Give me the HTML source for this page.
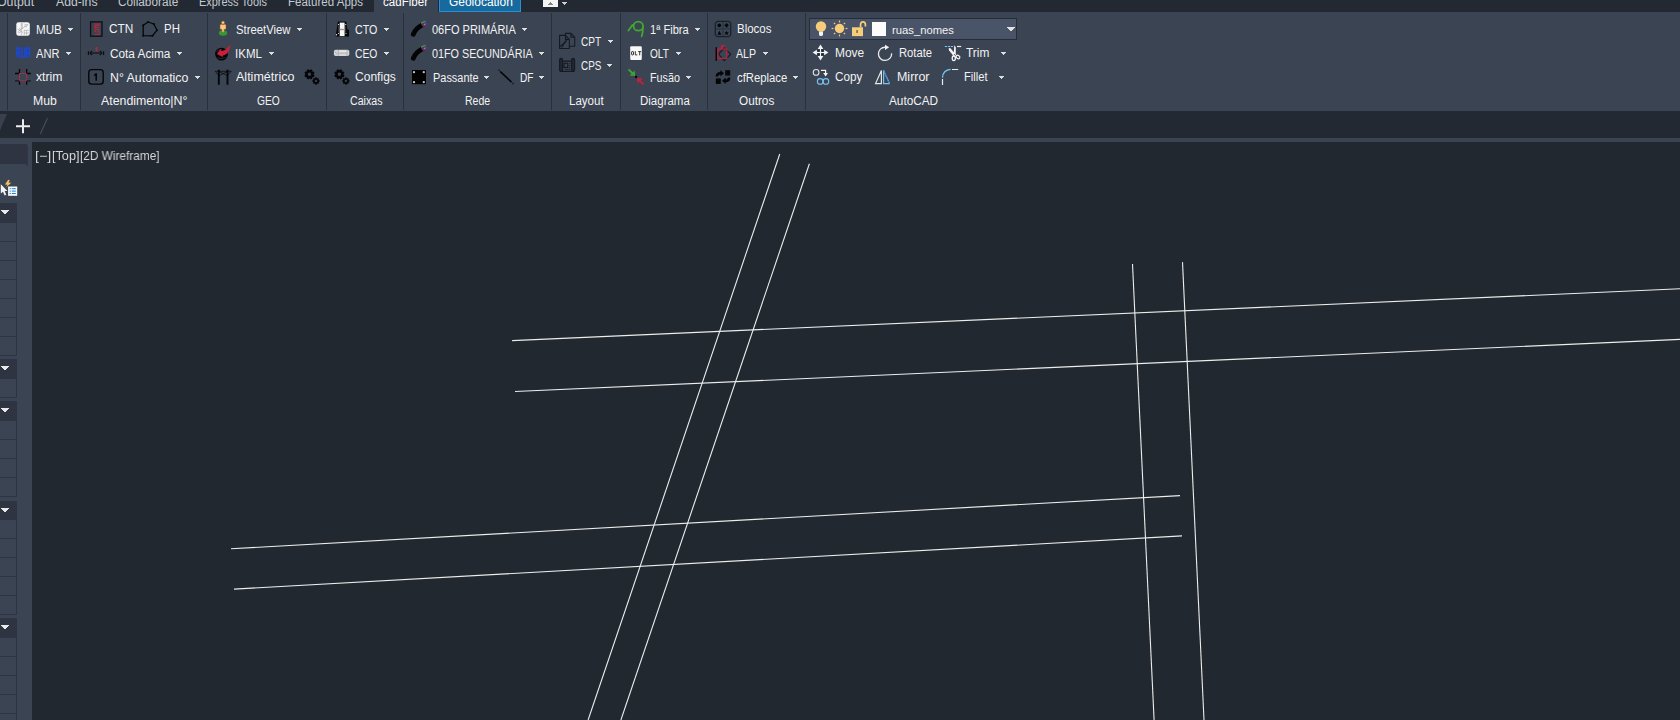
<!DOCTYPE html>
<html><head><meta charset="utf-8"><title>AutoCAD</title>
<style>
html,body{margin:0;padding:0;}
body{width:1680px;height:720px;overflow:hidden;background:#212830;position:relative;font-family:"Liberation Sans",sans-serif;}
.a{position:absolute;}
.t{position:absolute;white-space:pre;transform-origin:0 0;line-height:14px;height:14px;font-family:"Liberation Sans",sans-serif;}
.g{will-change:transform;}
i{position:absolute;display:block;}
.sp{top:13px;width:1px;height:97px;background:#2a303b;}
.ar{width:0;height:0;border-left:2.8px solid transparent;border-right:2.8px solid transparent;border-top:3.1px solid #d2d4d9;}
.ph{left:0;width:17px;height:19.5px;background:#2e3441;}
.pa{left:1px;width:0;height:0;border-left:4px solid transparent;border-right:4px solid transparent;border-top:4px solid #e4e4e4;}
.pr{left:0;width:16px;height:18px;border-right:1px solid #2e3441;border-bottom:1px solid #2e3441;}
svg.dw{position:absolute;left:0;top:0;}
svg.dw line{stroke:#ededed;stroke-width:1.1;}
svg.ic{position:absolute;overflow:visible;}
</style></head><body>
<!-- top tab strip -->
<div class="a" style="left:0;top:0;width:1680px;height:12px;background:#222933"></div>
<div class="a" style="left:374px;top:0;width:64px;height:12px;background:#3b4453"></div>
<div class="a" style="left:439px;top:-2px;width:80px;height:12px;background:#176a9d;border:1px solid #2c8fd6"></div>
<div class="a" style="left:543px;top:0;width:15px;height:7px;background:#f4f4f4"></div>
<!-- ribbon -->
<div class="a" style="left:0;top:12px;width:1680px;height:99px;background:#3b4453"></div>
<i class="sp" style="left:7px"></i>
<i class="sp" style="left:80px"></i>
<i class="sp" style="left:207px"></i>
<i class="sp" style="left:326px"></i>
<i class="sp" style="left:403px"></i>
<i class="sp" style="left:551px"></i>
<i class="sp" style="left:620px"></i>
<i class="sp" style="left:707px"></i>
<i class="sp" style="left:805px"></i>
<!-- layer combo -->
<div class="a" style="left:809px;top:18px;width:206px;height:20px;background:#4a5468;border:1px solid #272c37"></div>
<div class="a" style="left:872px;top:22px;width:14px;height:14px;background:#fbfbfb"></div>
<!-- file tab bar -->
<div class="a" style="left:0;top:111px;width:1680px;height:27px;background:#222933"></div>
<svg class="ic" style="left:0;top:111px" width="60" height="27" viewBox="0 111 60 27">
<polygon points="0,114 7,114 0,130.5" fill="#39414f"/>
<path d="M16 126.2H30M23 119.2V133.2" stroke="#ececec" stroke-width="2" fill="none"/>
<line x1="47.5" y1="118" x2="40.3" y2="134" stroke="#4d5563" stroke-width="1"/>
</svg>
<!-- strip under tab bar + left palette -->
<div class="a" style="left:0;top:138px;width:1680px;height:4px;background:#3b4453"></div>
<div class="a" style="left:0;top:142px;width:32px;height:578px;background:#3b4453"></div>
<svg class="ic" style="left:0;top:142px" width="32" height="30" viewBox="0 142 32 30">
<path d="M0 144H25.5Q27.8 144 27.8 146.3V166.6L25.5 164H0Z" fill="#2e3441"/>
</svg>
<i class="ph" style="top:203px"></i>
<i class="pr" style="top:222.5px"></i>
<i class="pr" style="top:241.5px"></i>
<i class="pr" style="top:260.5px"></i>
<i class="pr" style="top:279.5px"></i>
<i class="pr" style="top:298.5px"></i>
<i class="pr" style="top:317.5px"></i>
<i class="pr" style="top:336.5px"></i>
<i class="ph" style="top:359px"></i>
<i class="pr" style="top:378.5px"></i>
<i class="ph" style="top:401px"></i>
<i class="pr" style="top:420.5px"></i>
<i class="pr" style="top:439.5px"></i>
<i class="pr" style="top:458.5px"></i>
<i class="pr" style="top:477.5px"></i>
<i class="ph" style="top:500.5px"></i>
<i class="pr" style="top:520.0px"></i>
<i class="pr" style="top:539.0px"></i>
<i class="pr" style="top:558.0px"></i>
<i class="pr" style="top:577.0px"></i>
<i class="pr" style="top:596.0px"></i>
<i class="ph" style="top:618px"></i>
<i class="pr" style="top:637.5px"></i>
<i class="pr" style="top:656.5px"></i>
<i class="pr" style="top:675.5px"></i>
<i class="pr" style="top:694.5px"></i>
<i class="pr" style="top:713.5px"></i>
<i class="pr" style="top:732.5px"></i>
<svg class="dw" width="1680" height="720" viewBox="0 0 1680 720"><line x1="779.75" y1="154" x2="588.1" y2="720"/><line x1="809.4" y1="163.75" x2="620.9" y2="720"/><line x1="512.1" y1="340.6" x2="1680" y2="288.75"/><line x1="515" y1="391.5" x2="1680" y2="339.4"/><line x1="231" y1="548.75" x2="1180" y2="495.6"/><line x1="234" y1="589.1" x2="1182" y2="535.9"/><line x1="1132.5" y1="264" x2="1154.1" y2="720"/><line x1="1182.5" y1="262.1" x2="1204" y2="720"/></svg>
<svg class="ic" style="left:0;top:0" width="1680" height="200" viewBox="0 0 1680 200">
<!-- MUB -->
<rect x="16.3" y="22.2" width="13.5" height="13.6" rx="2.4" fill="#f7f7f7"/>
<g stroke="#ababab" stroke-width="0.7" fill="none"><path d="M21.3 23V35M22.3 23V29M18 31.6L28.4 24.2M17.5 29L23 32.5M19 28L21 30M23.8 30.3H29M24.2 30.3V35M26.6 30.3V35M24.2 33H29M24.5 24.2L28 25.3M24 26L27 27M18 33L20.5 32"/></g>
<!-- RUA -->
<g stroke="#1849dc" stroke-width="1.45" fill="none" stroke-linejoin="miter"><path d="M16.9 57.8V48H19.9V52.2H16.9M18.3 52.4L20.2 57.8"/><path d="M22.1 47.2V56.9H24.7V47.2"/><path d="M26.6 57.8V48H29.5V57.8M26.6 53.2H29.5"/></g>
<!-- xtrim -->
<g stroke="#050608" stroke-width="1.3" fill="none"><path d="M19.5 69V73.5M26.7 69V73.5M19.5 81V84.8M26.7 81V84.8M15 73.5H19.5M26.7 73.5H30.8"/><path d="M15 80.9H19.5M26.7 80.9H30.8" stroke="#1e232c" stroke-width="1.6"/></g>
<rect x="19.5" y="73.5" width="7.2" height="7.4" fill="none" stroke="#c9283e" stroke-width="1.0" stroke-dasharray="1.7 0.8"/>
<!-- CTN -->
<rect x="90.6" y="21.9" width="11.4" height="14.3" fill="#39424f" stroke="#0c1016" stroke-width="1.3"/>
<text transform="translate(99.1,35.3) rotate(-90)" font-family="Liberation Sans" font-weight="bold" font-size="7.2" fill="#cb2038" textLength="12.4" lengthAdjust="spacingAndGlyphs">LOTE</text>
<!-- PH -->
<polygon points="143.2,25.2 148.2,22 153.8,24 157,30.2 152.5,35.8 143.2,35.7" fill="none" stroke="#050608" stroke-width="1.3" stroke-linejoin="round"/>
<g fill="#050608"><circle cx="143.2" cy="25.2" r="1"/><circle cx="148.2" cy="22" r="1"/><circle cx="153.8" cy="24" r="1"/><circle cx="157" cy="30.2" r="1"/><circle cx="152.5" cy="35.8" r="1"/><circle cx="143.2" cy="35.7" r="1"/></g>
<!-- Cota Acima -->
<g stroke="#0b0e13" stroke-width="1.3" fill="none"><path d="M88.5 51.2V54.9M103.5 51.2V54.9"/><path d="M92 51L90.4 53 92 55M100 51L101.6 53 100 55" stroke-linejoin="round"/><path d="M91 53H101" stroke="#1d222b" stroke-width="1.7"/></g>
<path d="M95.1 48.2L96.5 47H97.3V51.1H96.1V48.5L95.1 49.2Z" fill="#cb2038"/>
<!-- N° Automatico -->
<rect x="88.8" y="69.6" width="14.4" height="14.5" rx="2.8" fill="none" stroke="#050608" stroke-width="1.4"/>
<path d="M93.9 74.7L95.6 73.2H97V80.8H95.4V75.3L93.9 76.3Z" fill="#050608"/>
<!-- StreetView -->
<ellipse cx="223" cy="32.9" rx="4.2" ry="2.6" fill="#2f9a30"/><path d="M221.6 34.6L223 36L224.4 34.6Z" fill="#2f9a30"/>
<path d="M220 25.6Q220 24.3 221.3 24.3H224.7Q226 24.3 226 25.6V28.6Q226 29.4 225 29.4H224.1V32.2H221.9V29.4H221Q220 29.4 220 28.6Z" fill="#f6ca7c" stroke="#9a4b22" stroke-width="0.5"/>
<circle cx="223" cy="22.6" r="1.6" fill="#f9d484" stroke="#9a4b22" stroke-width="0.5"/>
<path d="M222.3 24.4H223.7L223 25.3Z" fill="#a8402a"/>
<!-- IKML -->
<circle cx="221.5" cy="54.1" r="6.4" fill="#050608"/>
<path d="M216.3 51.5Q219 49.5 222 49.3M217 57.8Q221 59.3 225.5 57.6" stroke="#39424f" stroke-width="0.6" fill="none"/>
<path d="M230.6 44.9L229.4 49.6Q227.8 54.4 223 55.6L222.7 56.9L216.8 54L220.6 49L221.4 50.9Q226.2 50.2 228.4 46.4Z" fill="#c6203a"/>
<!-- Altimetrico -->
<g stroke="#050608" fill="none"><path d="M218.8 69.7V84.8M227.5 69.7V84.8" stroke-width="1.9"/><path d="M215.2 71.3H231.2M215.2 71.3L218.8 75.4M231.2 71.3L227.5 75.4M219 71.5L227.4 75.6M219 75.6L227.4 71.5" stroke-width="0.7"/></g>
<path d="M313.72 74.83 L314.60 75.31 L313.82 77.19 L312.86 76.90 L312.10 77.66 L312.39 78.62 L310.51 79.40 L310.03 78.52 L308.97 78.52 L308.49 79.40 L306.61 78.62 L306.90 77.66 L306.14 76.90 L305.18 77.19 L304.40 75.31 L305.28 74.83 L305.28 73.77 L304.40 73.29 L305.18 71.41 L306.14 71.70 L306.90 70.94 L306.61 69.98 L308.49 69.20 L308.97 70.08 L310.03 70.08 L310.51 69.20 L312.39 69.98 L312.10 70.94 L312.86 71.70 L313.82 71.41 L314.60 73.29 L313.72 73.77Z M307.80 74.30 a1.7 1.7 0 1 0 3.4 0 a1.7 1.7 0 1 0 -3.4 0Z" fill="#050608" fill-rule="evenodd"/><path d="M318.89 80.21 L319.68 80.27 L319.68 81.73 L318.89 81.79 L318.61 82.49 L319.12 83.08 L318.08 84.12 L317.49 83.61 L316.79 83.89 L316.73 84.68 L315.27 84.68 L315.21 83.89 L314.51 83.61 L313.92 84.12 L312.88 83.08 L313.39 82.49 L313.11 81.79 L312.32 81.73 L312.32 80.27 L313.11 80.21 L313.39 79.51 L312.88 78.92 L313.92 77.88 L314.51 78.39 L315.21 78.11 L315.27 77.32 L316.73 77.32 L316.79 78.11 L317.49 78.39 L318.08 77.88 L319.12 78.92 L318.61 79.51Z M314.85 81.00 a1.15 1.15 0 1 0 2.3 0 a1.15 1.15 0 1 0 -2.3 0Z" fill="#050608" fill-rule="evenodd"/>
<path d="M343.62 74.83 L344.50 75.31 L343.72 77.19 L342.76 76.90 L342.00 77.66 L342.29 78.62 L340.41 79.40 L339.93 78.52 L338.87 78.52 L338.39 79.40 L336.51 78.62 L336.80 77.66 L336.04 76.90 L335.08 77.19 L334.30 75.31 L335.18 74.83 L335.18 73.77 L334.30 73.29 L335.08 71.41 L336.04 71.70 L336.80 70.94 L336.51 69.98 L338.39 69.20 L338.87 70.08 L339.93 70.08 L340.41 69.20 L342.29 69.98 L342.00 70.94 L342.76 71.70 L343.72 71.41 L344.50 73.29 L343.62 73.77Z M337.70 74.30 a1.7 1.7 0 1 0 3.4 0 a1.7 1.7 0 1 0 -3.4 0Z" fill="#050608" fill-rule="evenodd"/><path d="M348.79 80.21 L349.58 80.27 L349.58 81.73 L348.79 81.79 L348.51 82.49 L349.02 83.08 L347.98 84.12 L347.39 83.61 L346.69 83.89 L346.63 84.68 L345.17 84.68 L345.11 83.89 L344.41 83.61 L343.82 84.12 L342.78 83.08 L343.29 82.49 L343.01 81.79 L342.22 81.73 L342.22 80.27 L343.01 80.21 L343.29 79.51 L342.78 78.92 L343.82 77.88 L344.41 78.39 L345.11 78.11 L345.17 77.32 L346.63 77.32 L346.69 78.11 L347.39 78.39 L347.98 77.88 L349.02 78.92 L348.51 79.51Z M344.75 81.00 a1.15 1.15 0 1 0 2.3 0 a1.15 1.15 0 1 0 -2.3 0Z" fill="#050608" fill-rule="evenodd"/>
<!-- CTO -->
<path d="M337.9 21.5H346.4L348.3 36.5H335.6Z" fill="#050608"/><path d="M347.2 29L349 30V36.4H347.8Z" fill="#050608"/>
<rect x="339.7" y="22.6" width="4.9" height="13.5" fill="#f6f6f6"/><rect x="339.7" y="28.8" width="4.9" height="1.4" fill="#9a9a9a"/>
<g fill="#f0f0f0"><circle cx="338.5" cy="24.5" r="0.6"/><circle cx="345.7" cy="24.5" r="0.6"/><circle cx="338.5" cy="33.5" r="0.6"/><circle cx="336.5" cy="34.7" r="0.7"/><circle cx="346" cy="33.5" r="0.6"/></g>
<path d="M338.6 25.5V32.5M345.7 25.5V32.5" stroke="#8a8a8a" stroke-width="0.4"/>
<!-- CEO -->
<rect x="333.9" y="49.8" width="15.4" height="6.3" rx="1.8" fill="#d6d6d6"/>
<g stroke="#9c9c9c" stroke-width="0.7" fill="none"><path d="M338.3 50V56M347 50V56M339 53H346.5M335 51.5L337 54.5"/></g>
<rect x="339" y="50.6" width="7.5" height="1.6" fill="#e8e8e8"/>
<g transform="translate(0,0)">
<path d="M413.4 34.2Q415.8 28.0 422.0 25.1" stroke="#030405" stroke-width="4.9" stroke-linecap="round" fill="none"/>
<g transform="rotate(-27 422 25.1)">
<rect x="421.9" y="22.5" width="5" height="1.3" fill="#3aa535"/><rect x="421.90" y="23.60" width="1.3" height="1.2" fill="#d02a2a"/><rect x="421.90" y="24.75" width="1.3" height="1.2" fill="#2146d6"/><rect x="421.90" y="25.90" width="1.3" height="1.2" fill="#d02a2a"/><rect x="423.15" y="23.60" width="1.3" height="1.2" fill="#2146d6"/><rect x="423.15" y="24.75" width="1.3" height="1.2" fill="#d02a2a"/><rect x="423.15" y="25.90" width="1.3" height="1.2" fill="#2146d6"/><rect x="424.40" y="23.60" width="1.3" height="1.2" fill="#d02a2a"/><rect x="424.40" y="24.75" width="1.3" height="1.2" fill="#2146d6"/><rect x="424.40" y="25.90" width="1.3" height="1.2" fill="#d02a2a"/><rect x="425.65" y="23.60" width="1.3" height="1.2" fill="#2146d6"/><rect x="425.65" y="24.75" width="1.3" height="1.2" fill="#d02a2a"/><rect x="425.65" y="25.90" width="1.3" height="1.2" fill="#2146d6"/>
<rect x="424.3" y="25.2" width="0.9" height="0.8" fill="#e8e0d0"/>
</g></g>
<g transform="translate(0,24)">
<path d="M413.4 34.2Q415.8 28.0 422.0 25.1" stroke="#030405" stroke-width="4.9" stroke-linecap="round" fill="none"/>
<g transform="rotate(-27 422 25.1)">
<rect x="421.9" y="22.5" width="5" height="1.3" fill="#3aa535"/><rect x="421.90" y="23.60" width="1.3" height="1.2" fill="#d02a2a"/><rect x="421.90" y="24.75" width="1.3" height="1.2" fill="#2146d6"/><rect x="421.90" y="25.90" width="1.3" height="1.2" fill="#d02a2a"/><rect x="423.15" y="23.60" width="1.3" height="1.2" fill="#2146d6"/><rect x="423.15" y="24.75" width="1.3" height="1.2" fill="#d02a2a"/><rect x="423.15" y="25.90" width="1.3" height="1.2" fill="#2146d6"/><rect x="424.40" y="23.60" width="1.3" height="1.2" fill="#d02a2a"/><rect x="424.40" y="24.75" width="1.3" height="1.2" fill="#2146d6"/><rect x="424.40" y="25.90" width="1.3" height="1.2" fill="#d02a2a"/><rect x="425.65" y="23.60" width="1.3" height="1.2" fill="#2146d6"/><rect x="425.65" y="24.75" width="1.3" height="1.2" fill="#d02a2a"/><rect x="425.65" y="25.90" width="1.3" height="1.2" fill="#2146d6"/>
<rect x="424.3" y="25.2" width="0.9" height="0.8" fill="#e8e0d0"/>
</g></g>
<!-- Passante -->
<rect x="412" y="70" width="14" height="14.2" fill="#020203"/>
<g fill="#c2c2c2"><circle cx="414" cy="72.2" r="1.15"/><circle cx="423.8" cy="72.2" r="1.15"/><circle cx="414" cy="82.2" r="1.15"/><circle cx="423.8" cy="82.2" r="1.15"/></g>
<!-- DF -->
<path d="M500.6 71.9L511 81.6" stroke="#050608" stroke-width="1.6" stroke-linecap="round"/><circle cx="499" cy="70.2" r="0.9" fill="#1a1f27"/><circle cx="513" cy="83.5" r="0.9" fill="#1a1f27"/>
<!-- CPT -->
<g stroke="#151a22" stroke-width="1.1" fill="none" stroke-linejoin="round"><path d="M565.4 35.3V33.4H571L574.7 37.2V46.3H569.3M571 33.4V37.2H574.7"/><path d="M559.6 35.4H565.5L569.3 39.4V48.5H559.6ZM565.5 35.4V39.4H569.3"/><path d="M561.6 46.2L566.6 40.2" stroke-width="1.6"/><circle cx="561.8" cy="46" r="1.2" stroke-width="0.8"/></g>
<!-- CPS -->
<g stroke="#151a22" fill="none"><rect x="559.6" y="58.4" width="3" height="13.2" rx="1.5" stroke-width="1.1" fill="#222833"/><rect x="571.6" y="58.4" width="3" height="13.2" rx="1.5" stroke-width="1.1" fill="#222833"/><path d="M562.6 61.2H571.6M561 71.3H573.2" stroke-width="1.2"/><rect x="564" y="63.3" width="3.8" height="4.2" stroke-width="1.1"/><path d="M569 63.6H570.6M569 65.5H570.6M569 67.4H570.6M565 69.4H570.6" stroke-width="0.7"/></g>
<!-- Fibra -->
<g stroke="#40a830" stroke-width="1.8" fill="none" stroke-linecap="round"><ellipse cx="638.3" cy="26.2" rx="4.75" ry="4.5"/><path d="M632.6 24.9L628.4 30.5M643 27.5Q642.8 33 641.7 36.3"/></g>
<!-- OLT -->
<rect x="630.2" y="46.2" width="11.6" height="13.8" rx="1.2" fill="#f8f8f8"/>
<g stroke="#2b2b2b" stroke-width="0.95" fill="none"><rect x="631.6" y="51.6" width="1.9" height="3.3" rx="0.5"/><path d="M635.3 51.2V54.9H637.3M638.2 51.6H641.2M639.7 51.6V55.3"/></g>
<!-- Fusao -->
<path d="M627.8 70L629.2 68.7L632.9 72.2L634.7 70.4L635.3 76.1L629.5 75.6L631.4 73.7Z" fill="#3ea232"/>
<circle cx="636" cy="77" r="1.15" fill="#050608"/>
<path d="M644.3 83.8L642.9 85.2L639.3 81.6L637.5 83.4L636.9 77.9L642.7 78.3L640.8 80.2Z" fill="#c1203a"/>
<!-- Blocos -->
<path d="M717.2 21.4H728.8L730.7 23.3V34.8L728.8 36.7H717.2L715.3 34.8V23.3Z" fill="none" stroke="#1a202a" stroke-width="1.2"/>
<path d="M723 22V36M716 28.9H730" stroke="#2a313d" stroke-width="1"/>
<circle cx="719.3" cy="25.3" r="1.85" fill="#050608"/><path d="M726.6 22.9L728.9 25.3L726.6 27.7L724.3 25.3Z" fill="#050608"/>
<path d="M719.4 30.8L721.3 34.7H717.5Z" fill="#050608"/><polygon points="726.60,30.80 727.21,32.26 728.79,32.39 727.58,33.42 727.95,34.96 726.60,34.13 725.25,34.96 725.62,33.42 724.41,32.39 725.99,32.26" fill="#050608"/>
<!-- ALP -->
<path d="M716.3 47.2V60.8" stroke="#050608" stroke-width="1.5"/>
<path d="M718.5 54L724.2 48L730.8 54.2L724.2 60.7Z" fill="none" stroke="#161b23" stroke-width="1.1"/>
<rect x="717.9" y="49" width="8.8" height="9.4" fill="none" stroke="#c1203a" stroke-width="1.2"/>
<path d="M721 48.6V45H725.2V46.2H723.2V48.6Z" fill="#c1203a"/>
<!-- cfReplace -->
<g fill="#050608"><rect x="725.2" y="70.2" width="5" height="5.4"/><rect x="715.8" y="78.4" width="5" height="5.5"/>
<path d="M715.6 76.6Q715.6 72 720.4 71.9V70L724 73.3L720.4 76.5V74.6Q718.2 74.7 718.2 76.6Z"/>
<path d="M730.4 77.5Q730.4 82.2 725.7 82.2V84L722 80.7L725.7 77.5V79.4Q727.8 79.4 727.8 77.5Z"/></g>
<!-- bulb / sun / lock -->
<circle cx="821" cy="26.5" r="5.2" fill="#f8cd7a"/><path d="M819 31.6H823V34.6Q823 36.1 821 36.1Q819 36.1 819 34.6Z" fill="#f2f2f2"/>
<circle cx="839.5" cy="28.5" r="4.7" fill="#f8cd7a"/><g stroke="#f8cd7a" stroke-width="1.2"><line x1="845.60" y1="28.50" x2="847.40" y2="28.50"/><line x1="843.81" y1="32.81" x2="845.09" y2="34.09"/><line x1="839.50" y1="34.60" x2="839.50" y2="36.40"/><line x1="835.19" y1="32.81" x2="833.91" y2="34.09"/><line x1="833.40" y1="28.50" x2="831.60" y2="28.50"/><line x1="835.19" y1="24.19" x2="833.91" y2="22.91"/><line x1="839.50" y1="22.40" x2="839.50" y2="20.60"/><line x1="843.81" y1="24.19" x2="845.09" y2="22.91"/></g>
<rect x="852" y="27.3" width="11" height="8.8" fill="#f8cd7a"/><rect x="856.5" y="30" width="1.1" height="3" fill="#39424f"/>
<path d="M860.6 27.5V24.6Q860.6 21.9 863 21.9Q865.4 21.9 865.4 24.6V26.6" fill="none" stroke="#f8cd7a" stroke-width="1.7"/>
<!-- Move -->
<g fill="#f4f4f4"><path d="M820.5 44.6L823.3 48.9H817.7Z"/><path d="M820.5 60.4L823.3 56.1H817.7Z"/><path d="M812.6 52.5L816.9 49.7V55.3Z"/><path d="M828.4 52.5L824.1 49.7V55.3Z"/><rect x="819.9" y="48" width="1.2" height="9"/><rect x="816" y="51.9" width="9" height="1.2"/></g>
<g fill="#222a38"><rect x="817.5" y="49.5" width="2.2" height="2.2"/><rect x="821.3" y="49.5" width="2.2" height="2.2"/><rect x="817.5" y="53.3" width="2.2" height="2.2"/><rect x="821.3" y="53.3" width="2.2" height="2.2"/></g>
<!-- Rotate -->
<path d="M885.2 47.25A6.6 6.6 0 1 0 891.6 53.2" fill="none" stroke="#ececec" stroke-width="1.3"/><path d="M885 44.7L889.2 47.3L885 49.9Z" fill="#f4f4f4"/>
<!-- Trim -->
<path d="M944.8 46.5H953.2" stroke="#79c3f3" stroke-width="1.2" stroke-dasharray="2.2 0.8"/><path d="M957 46.5H961.2" stroke="#ececec" stroke-width="1.2"/>
<g fill="#f4f4f4"><path d="M954.2 45.2L955.8 47.2V55.2H953.4L954 50Z"/><path d="M948.7 47.9L950.5 48.2L955.6 54.6L953.6 56.3L949 50.3Z"/></g>
<ellipse cx="953.8" cy="58.3" rx="1.6" ry="2.3" fill="none" stroke="#f4f4f4" stroke-width="1.3"/>
<ellipse cx="958" cy="57" rx="2" ry="1.5" fill="none" stroke="#f4f4f4" stroke-width="1.2" transform="rotate(35 958 57)"/>
<circle cx="954.4" cy="54.4" r="0.5" fill="#39424f"/>
<!-- Copy -->
<circle cx="816.1" cy="72.4" r="2.85" fill="none" stroke="#e2e2e2" stroke-width="1.1"/>
<path d="M821 70.4H825.6V73.4" fill="none" stroke="#f4f4f4" stroke-width="1.2"/><path d="M823.2 73.1H828L825.6 76.4Z" fill="#f4f4f4"/>
<circle cx="820.2" cy="81.45" r="2.85" fill="none" stroke="#79c3f3" stroke-width="1.1"/><circle cx="825.9" cy="81.45" r="2.85" fill="none" stroke="#79c3f3" stroke-width="1.1"/>
<!-- Mirror -->
<path d="M881.4 70.6V83.6H875.6Z" fill="none" stroke="#e6e6e6" stroke-width="1.2"/>
<path d="M883.6 70.6V83.6H889.6" fill="none" stroke="#79c3f3" stroke-width="1.2"/><path d="M883.6 70.6L889.6 83.6" stroke="#5aa9ee" stroke-width="1.3" stroke-dasharray="2 0.4"/>
<!-- Fillet -->
<path d="M942.5 77.7Q942.9 70 950.7 69.4" fill="none" stroke="#79c3f3" stroke-width="1.3"/>
<path d="M952 69.5H958.2M942.5 79V84.9" stroke="#ececec" stroke-width="1.2"/>
<!-- palette icon -->
<path d="M0.8 184.2V193.6L3 191.7L4.6 195.4L6.2 194.7L4.7 191.1L7.4 190.9Z" fill="#f4f4f4"/>
<path d="M8.2 179.8L5 184.4L7.6 184.7L6 187.6L11.2 182.8L8.4 182.6L9.8 180.2Z" fill="#f6c25e"/>
<rect x="8.1" y="186.5" width="9.1" height="9.3" fill="#fafafa"/>
<g stroke="#1b82d6" stroke-width="1"><path d="M9.6 188.7H10.8M11.8 188.7H15.8M9.6 191.1H10.8M11.8 191.1H15.8M9.6 193.5H10.8M11.8 193.5H15.8"/></g>
</svg>
<svg class="ic" style="left:0;top:0" width="1680" height="720" viewBox="0 0 1680 720" shape-rendering="crispEdges">
<path d="M68 28h5v1h-5zM69 29h3v1h-3zM70 30h1v1h-1z" fill="#dedede"/>
<path d="M66 52h5v1h-5zM67 53h3v1h-3zM68 54h1v1h-1z" fill="#dedede"/>
<path d="M177 52h5v1h-5zM178 53h3v1h-3zM179 54h1v1h-1z" fill="#dedede"/>
<path d="M195 76h5v1h-5zM196 77h3v1h-3zM197 78h1v1h-1z" fill="#dedede"/>
<path d="M297 28h5v1h-5zM298 29h3v1h-3zM299 30h1v1h-1z" fill="#dedede"/>
<path d="M269 52h5v1h-5zM270 53h3v1h-3zM271 54h1v1h-1z" fill="#dedede"/>
<path d="M384 28h5v1h-5zM385 29h3v1h-3zM386 30h1v1h-1z" fill="#dedede"/>
<path d="M384 52h5v1h-5zM385 53h3v1h-3zM386 54h1v1h-1z" fill="#dedede"/>
<path d="M522 28h5v1h-5zM523 29h3v1h-3zM524 30h1v1h-1z" fill="#dedede"/>
<path d="M539 52h5v1h-5zM540 53h3v1h-3zM541 54h1v1h-1z" fill="#dedede"/>
<path d="M484 76h5v1h-5zM485 77h3v1h-3zM486 78h1v1h-1z" fill="#dedede"/>
<path d="M539 76h5v1h-5zM540 77h3v1h-3zM541 78h1v1h-1z" fill="#dedede"/>
<path d="M608 40h5v1h-5zM609 41h3v1h-3zM610 42h1v1h-1z" fill="#dedede"/>
<path d="M607 64h5v1h-5zM608 65h3v1h-3zM609 66h1v1h-1z" fill="#dedede"/>
<path d="M695 28h5v1h-5zM696 29h3v1h-3zM697 30h1v1h-1z" fill="#dedede"/>
<path d="M676 52h5v1h-5zM677 53h3v1h-3zM678 54h1v1h-1z" fill="#dedede"/>
<path d="M686 76h5v1h-5zM687 77h3v1h-3zM688 78h1v1h-1z" fill="#dedede"/>
<path d="M763 52h5v1h-5zM764 53h3v1h-3zM765 54h1v1h-1z" fill="#dedede"/>
<path d="M793 76h5v1h-5zM794 77h3v1h-3zM795 78h1v1h-1z" fill="#dedede"/>
<path d="M1001 52h5v1h-5zM1002 53h3v1h-3zM1003 54h1v1h-1z" fill="#dedede"/>
<path d="M999 76h5v1h-5zM1000 77h3v1h-3zM1001 78h1v1h-1z" fill="#dedede"/>
<path d="M1007 27h8v1h-8zM1008 28h6v1h-6zM1009 29h4v1h-4zM1010 30h2v1h-2z" fill="#e2e2e2"/>
<path d="M562 2h5v1h-5zM563 3h3v1h-3zM564 4h1v1h-1z" fill="#cfcfcf"/>
<path d="M550 2h1v1h-1zM549 3h3v1h-3zM548 4h5v1h-5z" fill="#858585"/>
<path d="M1 210h8v1h-8zM2 211h6v1h-6zM3 212h4v1h-4zM4 213h2v1h-2z" fill="#e8e8e8"/>
<path d="M1 366h8v1h-8zM2 367h6v1h-6zM3 368h4v1h-4zM4 369h2v1h-2z" fill="#e8e8e8"/>
<path d="M1 408h8v1h-8zM2 409h6v1h-6zM3 410h4v1h-4zM4 411h2v1h-2z" fill="#e8e8e8"/>
<path d="M1 508h8v1h-8zM2 509h6v1h-6zM3 510h4v1h-4zM4 511h2v1h-2z" fill="#e8e8e8"/>
<path d="M1 625h8v1h-8zM2 626h6v1h-6zM3 627h4v1h-4zM4 628h2v1h-2z" fill="#e8e8e8"/>
</svg>
<span class="t" style="left:-3.00px;top:-5.40px;color:#c4c9d1;font-size:12px;transform:scaleX(1.0289)">Output</span>
<span class="t" style="left:55.60px;top:-5.40px;color:#c4c9d1;font-size:12px;transform:scaleX(1.0200)">Add-ins</span>
<span class="t" style="left:117.50px;top:-5.40px;color:#c4c9d1;font-size:12px;transform:scaleX(0.9822)">Collaborate</span>
<span class="t" style="left:198.75px;top:-5.40px;color:#c4c9d1;font-size:12px;transform:scaleX(0.9124)">Express Tools</span>
<span class="t" style="left:287.50px;top:-5.40px;color:#c4c9d1;font-size:12px;transform:scaleX(0.9604)">Featured Apps</span>
<span class="t" style="left:383.10px;top:-5.40px;color:#ffffff;font-size:12px;transform:scaleX(0.9638)">cadFiber</span>
<span class="t" style="left:448.75px;top:-5.40px;color:#ffffff;font-size:12px;transform:scaleX(0.9965)">Geolocation</span>
<span class="t" style="left:36.25px;top:23.00px;color:#f2f2f2;font-size:12px;transform:scaleX(0.9695)">MUB</span>
<span class="t" style="left:36.25px;top:47.00px;color:#f2f2f2;font-size:12px;transform:scaleX(0.9252)">ANR</span>
<span class="t" style="left:36.00px;top:69.50px;color:#f2f2f2;font-size:12px;transform:scaleX(1.0194)">xtrim</span>
<span class="t" style="left:32.75px;top:93.50px;color:#f2f2f2;font-size:12px;transform:scaleX(1.0203)">Mub</span>
<span class="t" style="left:109.40px;top:22.00px;color:#f2f2f2;font-size:12px;transform:scaleX(0.9877)">CTN</span>
<span class="t" style="left:163.75px;top:22.00px;color:#f2f2f2;font-size:12px;transform:scaleX(0.9529)">PH</span>
<span class="t" style="left:109.60px;top:47.00px;color:#f2f2f2;font-size:12px;transform:scaleX(0.9832)">Cota Acima</span>
<span class="t" style="left:109.60px;top:70.60px;color:#f2f2f2;font-size:12px;transform:scaleX(1.0291)">N° Automatico</span>
<span class="t" style="left:101.25px;top:93.50px;color:#f2f2f2;font-size:12px;transform:scaleX(1.0296)">Atendimento|N°</span>
<span class="t" style="left:236.25px;top:23.00px;color:#f2f2f2;font-size:12px;transform:scaleX(0.9417)">StreetView</span>
<span class="t" style="left:235.29px;top:47.00px;color:#f2f2f2;font-size:12px;transform:scaleX(0.9603)">IKML</span>
<span class="t" style="left:236.25px;top:69.50px;color:#f2f2f2;font-size:12px;transform:scaleX(1.0429)">Altimétrico</span>
<span class="t" style="left:256.50px;top:93.50px;color:#f2f2f2;font-size:12px;transform:scaleX(0.8543)">GEO</span>
<span class="t" style="left:355.40px;top:23.00px;color:#f2f2f2;font-size:12px;transform:scaleX(0.8919)">CTO</span>
<span class="t" style="left:355.40px;top:47.00px;color:#f2f2f2;font-size:12px;transform:scaleX(0.8609)">CEO</span>
<span class="t" style="left:355.40px;top:69.50px;color:#f2f2f2;font-size:12px;transform:scaleX(1.0040)">Configs</span>
<span class="t" style="left:349.60px;top:93.50px;color:#f2f2f2;font-size:12px;transform:scaleX(0.8860)">Caixas</span>
<span class="t" style="left:432.25px;top:23.00px;color:#f2f2f2;font-size:12px;transform:scaleX(0.9168)">06FO PRIMÁRIA</span>
<span class="t" style="left:432.25px;top:47.00px;color:#f2f2f2;font-size:12px;transform:scaleX(0.8985)">01FO SECUNDÁRIA</span>
<span class="t" style="left:432.50px;top:70.60px;color:#f2f2f2;font-size:12px;transform:scaleX(0.9114)">Passante</span>
<span class="t" style="left:519.60px;top:70.60px;color:#f2f2f2;font-size:12px;transform:scaleX(0.8394)">DF</span>
<span class="t" style="left:464.60px;top:93.50px;color:#f2f2f2;font-size:12px;transform:scaleX(0.8754)">Rede</span>
<span class="t" style="left:580.60px;top:34.75px;color:#f2f2f2;font-size:12px;transform:scaleX(0.8371)">CPT</span>
<span class="t" style="left:580.60px;top:58.60px;color:#f2f2f2;font-size:12px;transform:scaleX(0.8229)">CPS</span>
<span class="t" style="left:568.75px;top:93.50px;color:#f2f2f2;font-size:12px;transform:scaleX(0.9606)">Layout</span>
<span class="t" style="left:650.00px;top:23.00px;color:#f2f2f2;font-size:12px;transform:scaleX(0.9260)">1ª Fibra</span>
<span class="t" style="left:649.60px;top:47.00px;color:#f2f2f2;font-size:12px;transform:scaleX(0.8435)">OLT</span>
<span class="t" style="left:649.60px;top:70.60px;color:#f2f2f2;font-size:12px;transform:scaleX(0.8953)">Fusão</span>
<span class="t" style="left:639.60px;top:93.50px;color:#f2f2f2;font-size:12px;transform:scaleX(0.9581)">Diagrama</span>
<span class="t" style="left:736.50px;top:22.00px;color:#f2f2f2;font-size:12px;transform:scaleX(0.9551)">Blocos</span>
<span class="t" style="left:736.25px;top:47.00px;color:#f2f2f2;font-size:12px;transform:scaleX(0.8819)">ALP</span>
<span class="t" style="left:736.50px;top:70.60px;color:#f2f2f2;font-size:12px;transform:scaleX(0.9425)">cfReplace</span>
<span class="t" style="left:738.75px;top:93.50px;color:#f2f2f2;font-size:12px;transform:scaleX(0.9788)">Outros</span>
<span class="t" style="left:891.60px;top:22.90px;color:#f2f2f2;font-size:11px;transform:scaleX(1.0224)">ruas_nomes</span>
<span class="t" style="left:834.60px;top:46.00px;color:#f2f2f2;font-size:12px;transform:scaleX(0.9943)">Move</span>
<span class="t" style="left:898.75px;top:46.00px;color:#f2f2f2;font-size:12px;transform:scaleX(0.9347)">Rotate</span>
<span class="t" style="left:966.25px;top:46.00px;color:#f2f2f2;font-size:12px;transform:scaleX(0.9916)">Trim</span>
<span class="t" style="left:834.60px;top:69.70px;color:#f2f2f2;font-size:12px;transform:scaleX(0.9745)">Copy</span>
<span class="t" style="left:896.50px;top:69.70px;color:#f2f2f2;font-size:12px;transform:scaleX(1.0374)">Mirror</span>
<span class="t" style="left:963.75px;top:69.70px;color:#f2f2f2;font-size:12px;transform:scaleX(0.9288)">Fillet</span>
<span class="t" style="left:888.50px;top:93.50px;color:#f2f2f2;font-size:12px;transform:scaleX(0.9810)">AutoCAD</span>
<span class="t g" style="left:34.90px;top:148.80px;color:#d6d6d6;font-size:12px;transform:scaleX(1.1917)">[−]</span>
<span class="t g" style="left:52.10px;top:148.80px;color:#d6d6d6;font-size:12px;transform:scaleX(1.0552)">[Top]</span>
<span class="t g" style="left:80.00px;top:148.80px;color:#d6d6d6;font-size:12px;transform:scaleX(0.9858)">[2D Wireframe]</span>
</body></html>
